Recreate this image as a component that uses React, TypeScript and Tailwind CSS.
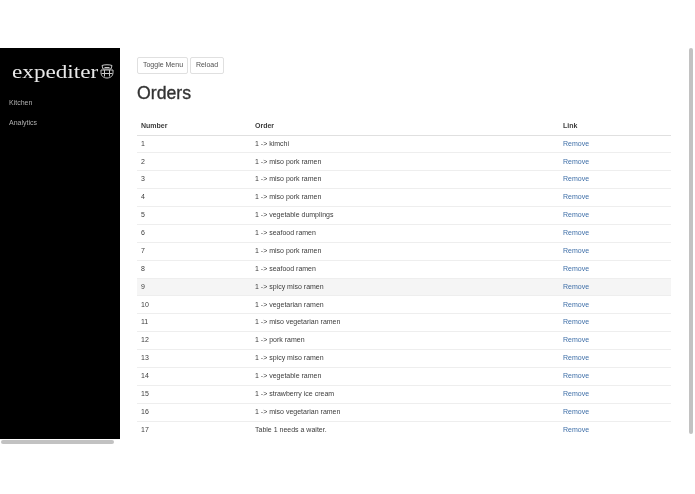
const rows = [
  "1 -> kimchi",
  "1 -> miso pork ramen",
  "1 -> miso pork ramen",
  "1 -> miso pork ramen",
  "1 -> vegetable dumplings",
  "1 -> seafood ramen",
  "1 -> miso pork ramen",
  "1 -> seafood ramen",
  "1 -> spicy miso ramen",
  "1 -> vegetarian ramen",
  "1 -> miso vegetarian ramen",
  "1 -> pork ramen",
  "1 -> spicy miso ramen",
  "1 -> vegetable ramen",
  "1 -> strawberry ice cream",
  "1 -> miso vegetarian ramen",
  "Table 1 needs a waiter.",
];

function Logo() {
  return (
    <svg width="14" height="15" viewBox="0 0 14 15" fill="none" stroke="#c8c8c8" strokeWidth="1" className="ml-[1px] mt-[3px] shrink-0">
      <path d="M2 1.500C4 .5 10 .5 12 1.500L11 5H3z" />
      <path d="M1 6h12v2.500c0 3.500-2.500 5.500-6 5.500S1 12 1 8.500z" />
      <path d="M4.500 3.500h5M4.500 6v6.500M9.500 6v6.500M1.500 9.500h11" />
    </svg>
  );
}

export default function App() {
  return (
    <div className="relative h-[494px] w-[695px] overflow-hidden bg-white pt-[48px] font-['Liberation_Sans',Arial,sans-serif] text-[#3c3c3c] blur-[0.35px]">
      <div className="flex items-start">
        <aside className="h-[391px] w-[120px] shrink-0 bg-black">
          <div className="mt-[12.500px] flex items-start pl-[12px]">
            <span className="inline-block w-[87px] origin-left scale-x-[1.22] whitespace-nowrap font-['Liberation_Serif',serif] text-[19px] leading-[22px] text-[#e8e8e8]">expediter</span>
            <Logo />
          </div>
          <nav className="mt-[15.500px] flex flex-col gap-[11px] pl-[9px] text-[7px] leading-[9px] text-[#b0b0b0]">
            <a>Kitchen</a>
            <a>Analytics</a>
          </nav>
        </aside>
        <main className="ml-[17px] w-[534px]">
          <div className="mt-[9px] flex gap-[2px]">
            <button className="h-[17px] w-[51px] rounded-[2px] border border-[#e0e0e0] bg-white pl-[1px] text-[7px] text-[#505050]">Toggle Menu</button>
            <button className="h-[17px] w-[34px] rounded-[2px] border border-[#e0e0e0] bg-white text-[7px] text-[#505050]">Reload</button>
          </div>
          <h1 className="mt-[9px] text-[17.700px] font-normal leading-[20px] text-[#333333] [-webkit-text-stroke:0.35px_#333333]">Orders</h1>
          <table className="mt-[14px] w-full table-fixed border-collapse text-[7px]">
            <thead>
              <tr className="h-[18px] border-b-[1.500px] border-[#e0e0e0] text-left">
                <th className="w-[118px] pl-[4px] font-bold">Number</th>
                <th className="w-[308px] font-bold">Order</th>
                <th className="font-bold">Link</th>
              </tr>
            </thead>
            <tbody>
              {rows.map((order, i) => (
                <tr key={i} className={`h-[17.875px] border-b border-[#eeeeee] last:border-b-0 ${i === 8 ? "bg-[#f5f5f5]" : ""}`}>
                  <td className="pl-[4px]">{i + 1}</td>
                  <td>{order}</td>
                  <td className="text-[#3f6fa8]">Remove</td>
                </tr>
              ))}
            </tbody>
          </table>
        </main>
      </div>
      <div className="absolute left-[1px] top-[440px] h-[4px] w-[113px] rounded-full bg-[#c2c2c2]" />
      <div className="absolute left-[689px] top-[48px] h-[386px] w-[4px] rounded-full bg-[#c2c2c2]" />
    </div>
  );
}
